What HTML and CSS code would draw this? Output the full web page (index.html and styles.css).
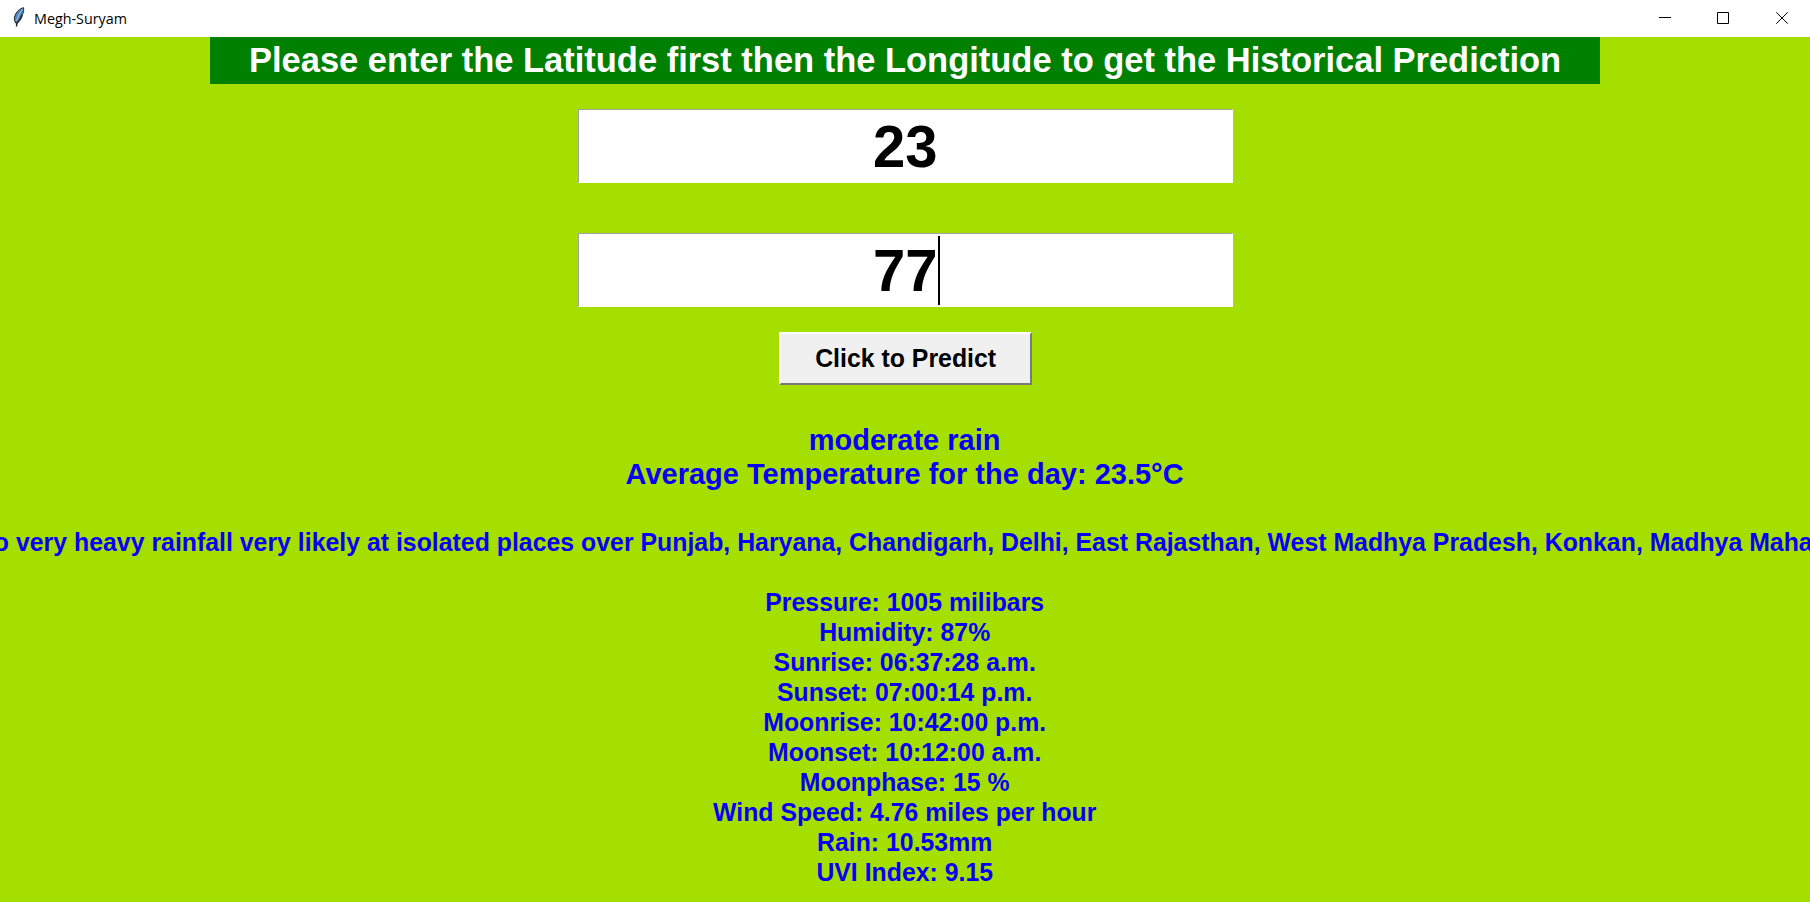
FILE: index.html
```html
<!DOCTYPE html>
<html lang="en">
<head>
<meta charset="utf-8">
<title>Megh-Suryam</title>
<link rel="stylesheet" href="styles.css">
</head>
<body>
<header class="titlebar">
  <svg class="feather" viewBox="0 0 12 20"><path d="M3.500 19.500 4 14" stroke="#222" stroke-width="1.500" fill="none"/><path d="M10.500.7C6.500 1.500 3 5 1.500 10c-.6 2.500.2 4.500 1.500 6.500C6.500 15 9 11 9.500 7.500c.9-1.500 1.500-4.500 1-6.800z" fill="#4f82bd" stroke="#252b33"/><path d="M3.500 14C5 9 7 5 9.500 2.500" stroke="#a9c8ea" fill="none"/><path d="M9 8C8 11.500 6 14 3.500 16.500" stroke="#333" stroke-width="1.800" fill="none"/></svg>
  <span class="title">Megh-Suryam</span>
  <div class="controls">
    <svg viewBox="0 0 12 12"><path d="M0 5.5h12"/></svg>
    <svg viewBox="0 0 12 12"><path d="M.5.5h11v11H.5z"/></svg>
    <svg class="close" viewBox="0 0 12 12"><path d="m.3.3 11.4 11.4m0-11.4L.3 11.7"/></svg>
  </div>
</header>
<main class="window">
  <h1 class="banner"><span>Please enter the Latitude first then the Longitude to get the Historical Prediction</span></h1>
  <div class="entry"><span class="value">23</span></div>
  <div class="entry second"><span class="focused"><span class="value">77</span></span></div>
  <button class="predict"><span class="narrow">Click to Predict</span></button>
  <div class="summary"><div>moderate rain</div><div>Average Temperature for the day: 23.5°C</div></div>
  <div class="alert"><span class="narrow">o very heavy rainfall very likely at isolated places over Punjab, Haryana, Chandigarh, Delhi, East Rajasthan, West Madhya Pradesh, Konkan, Madhya Maha</span></div>
  <div class="details">
    <div>Pressure: 1005 milibars</div>
    <div>Humidity: 87%</div>
    <div>Sunrise: 06:37:28 a.m.</div>
    <div>Sunset: 07:00:14 p.m.</div>
    <div>Moonrise: 10:42:00 p.m.</div>
    <div>Moonset: 10:12:00 a.m.</div>
    <div>Moonphase: 15 %</div>
    <div>Wind Speed: 4.76 miles per hour</div>
    <div>Rain: 10.53mm</div>
    <div>UVI Index: 9.15</div>
  </div>
</main>
</body>
</html>
```
FILE: styles.css
```css
* { box-sizing: border-box; }
body { margin: 0; width: 1810px; height: 902px; overflow: hidden; background: #a5df00; font-family: "Liberation Sans", Arial, sans-serif; }
.titlebar { height: 37px; background: #fff; display: flex; align-items: center; padding: 0 22px 1px 13px; }
.feather { width: 12px; height: 20px; margin: -3px 9px 0 0; }
.title { font: 15px/20px "Open Sans", sans-serif; color: #000; margin-top: -1px; transform: scaleX(.955); transform-origin: left; }
.controls { margin-left: auto; display: flex; gap: 46px; }
.controls svg { width: 12px; height: 12px; fill: none; stroke: #000; }
.controls .close { margin-left: 1px; }
.window { display: flex; flex-direction: column; align-items: center; font-weight: bold; color: #0800f6; white-space: nowrap; }
.narrow { display: inline-block; transform: scaleX(.956); }
.banner { margin: 0; width: 1390px; height: 47px; background: #008000; color: #fff; font-size: 35px; line-height: 46px; text-align: center; }
.banner span { display: inline-block; transform: scaleX(.985); }
.entry { margin: 25px 0 0 1px; width: 655px; height: 74px; background: #fff; border: 1px solid; border-color: #a0a0a0 #fff #fff #a0a0a0; color: #000; font-size: 60px; line-height: 73px; text-align: center; }
.second { margin-top: 50px; }
.value { display: inline-block; transform: scaleX(.967); }
.focused { display: inline-block; position: relative; }
.focused::after { content: ""; position: absolute; right: -1px; top: 2px; width: 2px; height: 69px; background: #000; }
.predict { margin-top: 25px; width: 253px; height: 53px; background: #f0f0f0; border: 2px solid; border-color: #fff #7a7a7a #7a7a7a #fff; font: bold 26px "Liberation Sans", Arial, sans-serif; color: #000; padding: 0 0 1px 1px; }
.summary { margin-top: 38px; font-size: 30px; line-height: 34px; text-align: center; transform: scaleX(.967); }
.alert { margin-top: 36px; width: 1810px; display: flex; justify-content: center; overflow: hidden; font-size: 26px; line-height: 30px; padding-right: 4px; }
.details { margin-top: 30px; font-size: 26px; line-height: 30px; text-align: center; transform: scaleX(.955); }
```
